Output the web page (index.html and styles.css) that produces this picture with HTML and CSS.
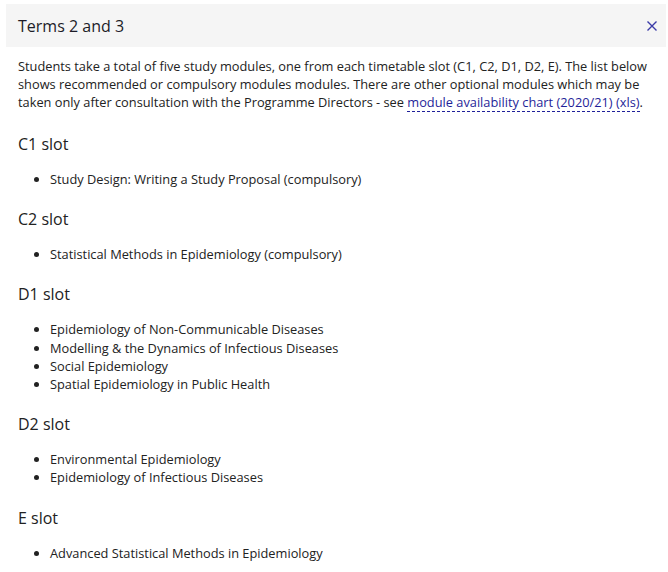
FILE: index.html
```html
<!DOCTYPE html>
<html lang="en">
<head>
<meta charset="utf-8">
<link rel="stylesheet" href="styles.css">
</head>
<body>
<section class="panel">
  <header class="panel-head">
    <h2 class="panel-title">Terms 2 and 3</h2>
    <button class="close" aria-label="Close">
      <svg width="10" height="10" viewBox="0 0 10 10"><path d="M0.5 0.5L9.5 9.5M9.5 0.5L0.5 9.5" stroke="currentColor" stroke-width="1.4" fill="none"/></svg>
    </button>
  </header>
  <div class="panel-body">
    <p class="intro">Students take a total of five study modules, one from each timetable slot (C1, C2, D1, D2, E). The list below shows recommended or compulsory modules modules. There are other optional modules which may be taken only after consultation with the Programme Directors - see <a href="#" class="link">module availability chart (2020/21) (xls)</a>.</p>
    <h3 class="slot">C1 slot</h3>
    <ul class="mods">
      <li>Study Design: Writing a Study Proposal (compulsory)</li>
    </ul>
    <h3 class="slot">C2 slot</h3>
    <ul class="mods">
      <li>Statistical Methods in Epidemiology (compulsory)</li>
    </ul>
    <h3 class="slot">D1 slot</h3>
    <ul class="mods">
      <li>Epidemiology of Non-Communicable Diseases</li>
      <li>Modelling &amp; the Dynamics of Infectious Diseases</li>
      <li>Social Epidemiology</li>
      <li>Spatial Epidemiology in Public Health</li>
    </ul>
    <h3 class="slot">D2 slot</h3>
    <ul class="mods">
      <li>Environmental Epidemiology</li>
      <li>Epidemiology of Infectious Diseases</li>
    </ul>
    <h3 class="slot">E slot</h3>
    <ul class="mods">
      <li>Advanced Statistical Methods in Epidemiology</li>
    </ul>
  </div>
</section>
</body>
</html>
```

FILE: styles.css
```css
html, body {
  margin: 0;
  padding: 0;
  background: #fff;
}
body {
  font-family: "Open Sans", "Liberation Sans", sans-serif;
  color: #222;
  padding: 4px 2px 0 6px;
}
.panel-head {
  display: flex;
  align-items: center;
  justify-content: space-between;
  background: #f5f5f5;
  height: 43px;
  padding: 0 9px 0 12px;
}
.panel-title {
  margin: 0;
  font-size: 16px;
  font-weight: 400;
  color: #1c1c28;
}
.close {
  border: 0;
  background: none;
  padding: 0;
  color: #3b3ba8;
  display: flex;
  cursor: pointer;
}
.panel-body {
  padding: 10px 6px 0 12px;
}
.intro {
  margin: 0;
  font-size: 12.8px;
  line-height: 18px;
}
.link {
  color: #1f1f99;
  text-decoration: none;
  border-bottom: 1px dashed #1f1f99;
}
.slot {
  margin: 21px 0 0;
  font-size: 16px;
  line-height: 24px;
  font-weight: 400;
}
.mods + .slot {
  margin-top: 19px;
}
.mods {
  margin: 14px 0 0;
  padding-left: 32px;
  font-size: 12.8px;
  line-height: 18.2px;
}
```
